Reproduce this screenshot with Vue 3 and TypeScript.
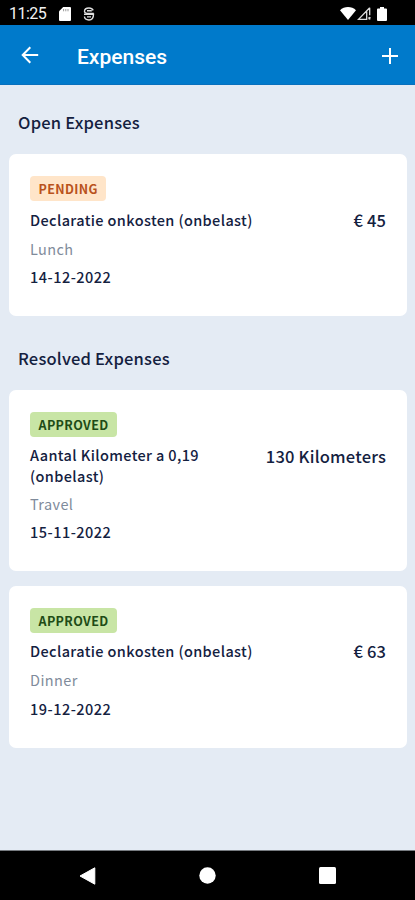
<script setup lang="ts">
interface Expense {
  status: 'pending' | 'approved'
  title: string
  amount: string
  category: string
  date: string
}

interface Section {
  heading: string
  items: Expense[]
}

const sections: Section[] = [
  {
    heading: 'Open Expenses',
    items: [
      { status: 'pending', title: 'Declaratie onkosten (onbelast)', amount: '€ 45', category: 'Lunch', date: '14-12-2022' },
    ],
  },
  {
    heading: 'Resolved Expenses',
    items: [
      { status: 'approved', title: 'Aantal Kilometer a 0,19 (onbelast)', amount: '130 Kilometers', category: 'Travel', date: '15-11-2022' },
      { status: 'approved', title: 'Declaratie onkosten (onbelast)', amount: '€ 63', category: 'Dinner', date: '19-12-2022' },
    ],
  },
]
</script>

<template>
  <div class="screen">
    <div class="status-bar">
      <span class="clock">11:25</span>
      <svg class="sd" width="12" height="14" viewBox="0 0 12 14">
        <path d="M4.2 0H11a1 1 0 0 1 1 1v12a1 1 0 0 1-1 1H1a1 1 0 0 1-1-1V4.2z" fill="#fff" />
        <path d="M4.600 2v2.300M6.800 2v2.300M9 2v2.300" stroke="#999" stroke-width="1" />
      </svg>
      <svg class="sync" width="12" height="14" viewBox="0 0 12 14" fill="none" stroke="#e0e0e0" stroke-width="1.400">
        <path d="M10.200 3.400C9.400 1.800 7.900 1 6 1 3.300 1 1.500 2.300 1.500 4.200S3 6.500 6 6.500h4.800" />
        <path d="M1 7.200h9.500c0 3.500-1.500 5.800-4.500 5.800S1.500 11.500 1.500 9.500M4 3.800h4.800M4 9.900h4" />
      </svg>
      <span class="spacer"></span>
      <svg width="16" height="13" viewBox="0 0 16 13">
        <path d="M0 3.200C2.200 1.100 5 0 8 0s5.800 1.100 8 3.200L8 13z" fill="#fff" />
      </svg>
      <svg class="signal" width="14" height="13" viewBox="0 0 14 13" fill="none" stroke="#ddd" stroke-width="1.300">
        <path d="M12.700.8 1.500 12.300h8.200V4.500M12.700.8v7.500M11.600 10.200l1.800 2M13.400 10.200l-1.800 2" />
      </svg>
      <svg class="battery" width="10" height="14" viewBox="0 0 10 14">
        <path d="M3 0h4v1.500h2a1 1 0 0 1 1 1V13a1 1 0 0 1-1 1H1a1 1 0 0 1-1-1V2.500a1 1 0 0 1 1-1h2z" fill="#fff" />
      </svg>
    </div>

    <header class="app-bar">
      <svg width="18" height="18" viewBox="0 0 18 18" fill="none" stroke="#fff" stroke-width="2">
        <path d="M17.200 9H2M9.300 1.300 1.700 9l7.600 7.700" />
      </svg>
      <h1>Expenses</h1>
      <svg class="add" width="16" height="16" viewBox="0 0 16 16" fill="none" stroke="#fff" stroke-width="2">
        <path d="M8 0v16M0 8h16" />
      </svg>
    </header>

    <main class="content">
      <section v-for="section in sections" :key="section.heading">
        <h2>{{ section.heading }}</h2>
        <div class="cards">
          <article v-for="item in section.items" :key="item.date" class="card">
            <span class="badge" :class="item.status">{{ item.status.toUpperCase() }}</span>
            <div class="row">
              <p class="title">{{ item.title }}</p>
              <p class="amount">{{ item.amount }}</p>
            </div>
            <p class="category">{{ item.category }}</p>
            <p class="date">{{ item.date }}</p>
          </article>
        </div>
      </section>
    </main>

    <nav class="nav-bar">
      <svg width="17" height="18" viewBox="0 0 17 18"><path d="M15.800.8V17.200L1 9z" fill="#fff" stroke="#fff" stroke-linejoin="round" /></svg>
      <svg width="17" height="17" viewBox="0 0 17 17"><circle cx="8.500" cy="8.500" r="8.200" fill="#fff" /></svg>
      <svg width="17" height="17" viewBox="0 0 17 17"><rect width="17" height="17" rx="1.500" fill="#fff" /></svg>
    </nav>
  </div>
</template>

<style>
body {
  margin: 0;
  background: #e4ebf4;
}
</style>

<style scoped>
.screen {
  display: flex;
  flex-direction: column;
  height: 900px;
  overflow: hidden;
  background: #e4ebf4;
  color: #14213f;
  font-family: "Noto Sans CJK SC", "Noto Sans", sans-serif;
}
svg {
  display: block;
  flex: none;
}
h1,
h2,
p {
  margin: 0;
}
.status-bar {
  display: flex;
  align-items: center;
  box-sizing: border-box;
  height: 25px;
  padding: 2px 28px 0 9px;
  background: #000;
}
.clock {
  width: 50px;
  color: #f2f2f2;
  font: 400 16px/20px Roboto, sans-serif;
  letter-spacing: -0.500px;
}
.sync {
  margin-left: 12px;
}
.spacer {
  flex: 1;
}
.signal {
  margin-left: 1px;
}
.battery {
  margin-left: 6px;
}
.app-bar {
  display: flex;
  align-items: center;
  box-sizing: border-box;
  height: 59.5px;
  padding: 1px 17px 0 21px;
  background: #007acb;
  border-bottom: 1px solid #0870bd;
}
.app-bar h1 {
  flex: 1;
  margin-left: 38px;
  padding-top: 5px;
  color: #fff;
  font: 500 21px/28px Roboto, sans-serif;
}
.add {
  margin-top: 2px;
}
.content {
  flex: 1;
  padding: 0 8.500px 0 9px;
}
h2 {
  padding: 25.400px 9px 20.600px;
  font-size: 16.500px;
  font-weight: 500;
  line-height: 24px;
  letter-spacing: 0.200px;
}
.cards {
  display: flex;
  flex-direction: column;
  gap: 14.600px;
}
section + section {
  margin-top: 4px;
}
.card {
  display: flex;
  flex-direction: column;
  align-items: flex-start;
  padding: 21.500px 20.300px 29.300px 21px;
  border-radius: 7px;
  background: #fff;
}
.badge {
  padding: 0 8.500px;
  border-radius: 4px;
  font-size: 12.500px;
  font-weight: 700;
  line-height: 25px;
  letter-spacing: 0.370px;
}
.badge.pending {
  background: #ffe5c9;
  color: #b9521c;
}
.badge.approved {
  background: #c8e5a5;
  color: #204b16;
}
.row {
  display: flex;
  justify-content: space-between;
  align-items: center;
  align-self: stretch;
  margin-top: 6.600px;
}
.title {
  width: 228px;
  font-size: 14.500px;
  font-weight: 500;
  line-height: 21.500px;
  letter-spacing: 0.370px;
}
.amount {
  align-self: flex-start;
  font-size: 16.500px;
  font-weight: 500;
  line-height: 24px;
  letter-spacing: 0.200px;
  white-space: nowrap;
}
.category,
.date {
  margin-top: 6.300px;
  font-size: 14.500px;
  line-height: 21.500px;
  letter-spacing: 0.400px;
}
.date {
  margin-top: 7px;
  margin-bottom: -0.700px;
  font-weight: 500;
  letter-spacing: 0.480px;
}
.category {
  color: #7f8b9b;
}
.nav-bar {
  display: flex;
  align-items: center;
  justify-content: space-between;
  box-sizing: border-box;
  height: 50px;
  padding: 0 79px;
  border-top: 1px solid #777b80;
  background: #000;
}
</style>
